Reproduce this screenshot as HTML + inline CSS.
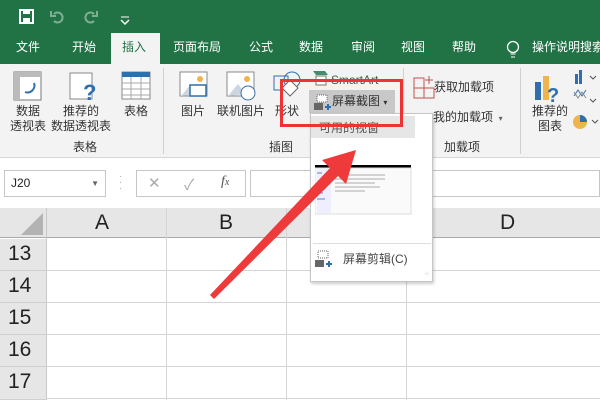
<!DOCTYPE html>
<html><head><meta charset="utf-8"><style>
*{margin:0;padding:0;box-sizing:border-box}
body{width:600px;height:400px;overflow:hidden;position:relative;background:#fff;font-family:"Liberation Sans","Noto Sans CJK SC",sans-serif;font-size:12px;color:#222}
.a{position:absolute;white-space:nowrap}
.tab{position:absolute;top:38px;color:#fff;font-size:12px;white-space:nowrap}
.rb{position:absolute;font-size:12px;color:#333;text-align:center;line-height:15px;white-space:nowrap}
.rn{position:absolute;left:0;width:46px;font-size:21px;color:#222;padding-left:8px;padding-top:3px;background:#e6e6e6;border-bottom:1px solid #d0d0d0}
</style></head><body>
<div class="a" style="left:0;top:0;width:600px;height:64px;background:#217346"></div>
<svg class="a" style="left:18px;top:8px" width="120" height="18">
<rect x="2" y="2" width="13" height="13" fill="none" stroke="#fff" stroke-width="2"/><rect x="5" y="2" width="7" height="4" fill="#fff"/><rect x="5" y="10" width="7" height="5" fill="#fff"/>
<path d="M36 6a5 5 0 1 1 0 7" stroke="#7fae93" stroke-width="2" fill="none"/><path d="M33 3v5h5" stroke="#7fae93" stroke-width="2" fill="none"/>
<path d="M76 6a5 5 0 1 0 0 7" stroke="#7fae93" stroke-width="2" fill="none"/><path d="M79 3v5h-5" stroke="#7fae93" stroke-width="2" fill="none"/>
<path d="M103 12l4 4 4-4" stroke="#fff" stroke-width="1.5" fill="none"/><path d="M103 9h8" stroke="#fff"/>
</svg>
<div class="a" style="left:111px;top:33px;width:49px;height:31px;background:#f3f3f3"></div>
<div class="tab" style="left:16px">文件</div>
<div class="tab" style="left:72px">开始</div>
<div class="tab" style="left:122px;color:#217346">插入</div>
<div class="tab" style="left:173px">页面布局</div>
<div class="tab" style="left:249px">公式</div>
<div class="tab" style="left:299px">数据</div>
<div class="tab" style="left:351px">审阅</div>
<div class="tab" style="left:401px">视图</div>
<div class="tab" style="left:452px">帮助</div>
<svg class="a" style="left:506px;top:40px" width="14" height="20"><circle cx="7" cy="7" r="5.5" stroke="#fff" fill="none" stroke-width="1.3"/><path d="M4.5 14h5M5 17h4" stroke="#fff"/></svg>
<div class="tab" style="left:532px">操作说明搜索</div>
<div class="a" style="left:0;top:64px;width:600px;height:94px;background:#f3f3f3;border-bottom:1px solid #d6d6d6"></div>
<div class="a" style="left:163px;top:68px;width:1px;height:86px;background:#d0d0d0"></div>
<div class="a" style="left:403px;top:68px;width:1px;height:86px;background:#d0d0d0"></div>
<div class="a" style="left:520px;top:68px;width:1px;height:86px;background:#d0d0d0"></div>
<svg class="a" style="left:0;top:68px" width="600" height="40">
<rect x="14" y="4" width="27" height="28" fill="#fff" stroke="#777"/><rect x="14" y="4" width="27" height="5" fill="#bbb"/><rect x="14" y="4" width="6" height="28" fill="#bbb"/><path d="M25 24a7 7 0 0 0 9-9" stroke="#2f6fad" stroke-width="2" fill="none"/>
<rect x="70" y="5" width="22" height="26" fill="#fff" stroke="#888"/><text x="83" y="32" font-size="22" font-weight="bold" fill="#2f6fad">?</text>
<rect x="122" y="4" width="28" height="27" fill="#fff" stroke="#888"/><rect x="122" y="4" width="28" height="5" fill="#2f6fad"/><path d="M122 15h28M122 21h28M122 27h28M131 9v22M141 9v22" stroke="#aaa"/>
<rect x="180" y="4" width="27" height="24" fill="#fff" stroke="#888"/><path d="M181 28l10-12 8 10" fill="#cdd6e0"/><circle cx="200" cy="11" r="3" fill="#f0b44c"/><rect x="190" y="17" width="16" height="11" fill="#fff" stroke="#2f6fad" stroke-width="1.5"/>
<rect x="227" y="4" width="27" height="24" fill="#fff" stroke="#888"/><path d="M228 28l10-12 8 10" fill="#cdd6e0"/><circle cx="247" cy="11" r="3" fill="#f0b44c"/><circle cx="248" cy="25" r="7" fill="#fff" stroke="#2f6fad"/>
<rect x="274" y="8" width="14" height="14" fill="none" stroke="#2f6fad"/><circle cx="292" cy="12" r="8" fill="none" stroke="#2f6fad"/><path d="M290 12l8 8-8 8-8-8z" fill="#fff" stroke="#666"/>
<path d="M313 3h12l3 4h-12z" fill="#4a8a6a"/><rect x="316" y="8" width="10" height="9" fill="#fff" stroke="#777"/>
<rect x="414" y="10" width="10" height="10" fill="none" stroke="#c0504d"/><rect x="414" y="20" width="10" height="10" fill="none" stroke="#c0504d"/><rect x="424" y="20" width="10" height="10" fill="none" stroke="#c0504d"/><path d="M429 8v8M425 12h8" stroke="#c0504d"/>
<rect x="535" y="14" width="6" height="18" fill="#2f6fad"/><rect x="543" y="8" width="6" height="24" fill="#f0b44c"/><text x="547" y="34" font-size="20" font-weight="bold" fill="#2f6fad">?</text>
<rect x="575" y="6" width="3" height="10" fill="#2f6fad"/><rect x="579" y="2" width="3" height="14" fill="#2f6fad"/><path d="M574 28l4-6 4 6 4-6" stroke="#2f6fad" fill="none"/><path d="M574 24l4 6 4-6 4 6" stroke="#888" fill="none"/>
<path d="M590 8l3 3 3-3M590 31l3 3 3-3" stroke="#555" fill="none"/>
</svg>
<svg class="a" style="left:570px;top:112px" width="30" height="20"><circle cx="10" cy="10" r="7" fill="#f0b44c"/><path d="M10 10V3a7 7 0 0 1 7 7z" fill="#2f6fad"/><path d="M22 8l3 3 3-3" stroke="#555" fill="none"/></svg>
<div class="rb" style="left:4px;top:104px;width:48px">数据<br>透视表</div>
<div class="rb" style="left:48px;top:104px;width:66px">推荐的<br>数据透视表</div>
<div class="rb" style="left:116px;top:104px;width:40px">表格</div>
<div class="rb" style="left:65px;top:140px;width:40px">表格</div>
<div class="rb" style="left:175px;top:104px;width:36px">图片</div>
<div class="rb" style="left:214px;top:104px;width:54px">联机图片</div>
<div class="rb" style="left:270px;top:104px;width:34px">形状</div>
<div class="rb" style="left:264px;top:140px;width:34px">插图</div>
<div class="rb" style="left:331px;top:73px;color:#555">SmartArt</div>
<div class="a" style="left:309px;top:90px;width:86px;height:23px;background:#c8c8c8"></div>
<svg class="a" style="left:313px;top:93px" width="18" height="18"><rect x="4" y="2" width="10" height="7" fill="#fff" stroke="#666" stroke-dasharray="1 1"/><rect x="1" y="10" width="9" height="7" fill="#666"/><path d="M12 14h6M15 11v6" stroke="#2f6fad" stroke-width="2"/></svg>
<div class="rb" style="left:332px;top:94px">屏幕截图 <span style="font-size:8px">▾</span></div>
<div class="rb" style="left:434px;top:80px">获取加载项</div>
<div class="rb" style="left:433px;top:110px">我的加载项 <span style="font-size:8px;color:#666">&nbsp;▾</span></div>
<div class="rb" style="left:444px;top:140px">加载项</div>
<div class="rb" style="left:528px;top:104px;width:44px">推荐的<br>图表</div>
<div class="a" style="left:0;top:159px;width:600px;height:49px;background:#fff"></div>
<div class="a" style="left:4px;top:170px;width:102px;height:27px;border:1px solid #c6c6c6;padding:5px 6px;font-size:12px">J20<span style="position:absolute;right:6px;font-size:8px;color:#666;top:8px">▼</span></div>
<div class="a" style="left:119px;top:174px;color:#aaa;font-size:10px;line-height:6px">·<br>·<br>·</div>
<div class="a" style="left:136px;top:170px;width:110px;height:27px;border:1px solid #c6c6c6"></div>
<div class="a" style="left:148px;top:174px;color:#aaa;font-size:15px">✕</div>
<div class="a" style="left:184px;top:174px;color:#aaa;font-size:15px">✓</div>
<div class="a" style="left:221px;top:174px;color:#555;font-size:14px;font-style:italic;font-family:'Liberation Serif',serif">f<span style="font-size:10px">x</span></div>
<div class="a" style="left:250px;top:170px;width:350px;height:27px;border:1px solid #c6c6c6"></div>
<div class="a" style="left:0;top:208px;width:600px;height:30px;background:#e6e6e6;border-bottom:1px solid #aaa"></div>
<svg class="a" style="left:20px;top:212px" width="24" height="24"><path d="M23 1v22H1z" fill="#b3b3b3"/></svg>
<div class="a" style="left:46px;top:208px;width:1px;height:192px;background:#c8c8c8"></div>
<div class="a" style="left:166px;top:208px;width:1px;height:192px;background:#d4d4d4"></div>
<div class="a" style="left:286px;top:208px;width:1px;height:192px;background:#d4d4d4"></div>
<div class="a" style="left:406px;top:208px;width:1px;height:192px;background:#d4d4d4"></div>
<div class="a" style="left:95px;top:211px;font-size:21px">A</div>
<div class="a" style="left:219px;top:211px;font-size:21px">B</div>
<div class="a" style="left:500px;top:211px;font-size:21px">D</div>
<div class="rn" style="top:239px;height:32px">13</div>
<div class="rn" style="top:271px;height:32px">14</div>
<div class="rn" style="top:303px;height:32px">15</div>
<div class="rn" style="top:335px;height:32px">16</div>
<div class="rn" style="top:367px;height:33px">17</div>
<div class="a" style="left:46px;top:270px;width:554px;height:1px;background:#d4d4d4"></div>
<div class="a" style="left:46px;top:302px;width:554px;height:1px;background:#d4d4d4"></div>
<div class="a" style="left:46px;top:334px;width:554px;height:1px;background:#d4d4d4"></div>
<div class="a" style="left:46px;top:366px;width:554px;height:1px;background:#d4d4d4"></div>
<div class="a" style="left:46px;top:398px;width:554px;height:1px;background:#d4d4d4"></div>
<div class="a" style="left:310px;top:113px;width:123px;height:169px;background:#fff;border:1px solid #c6c6c6;box-shadow:1px 2px 3px rgba(0,0,0,.2)"></div>
<div class="a" style="left:311px;top:116px;width:104px;height:22px;background:#e6e6e6;color:#555;padding:3px 8px">可用的视窗</div>
<svg class="a" style="left:315px;top:165px" width="97" height="52"><rect x="0" y="0" width="96" height="3" fill="#000"/><rect x="0" y="3" width="96" height="46" fill="#fafafa" stroke="#ddd"/><rect x="2" y="4" width="14" height="44" fill="#eef"/><path d="M20 10h50M20 14h50M20 18h40M20 22h45M20 26h30" stroke="#aaa"/><path d="M2 8h5M2 20h8M2 28h6M2 34h8" stroke="#5a87c8"/></svg>
<div class="a" style="left:313px;top:243px;width:118px;height:1px;background:#ddd"></div>
<svg class="a" style="left:314px;top:250px" width="20" height="18"><rect x="4" y="1" width="10" height="7" fill="none" stroke="#666" stroke-dasharray="1 1"/><rect x="1" y="10" width="9" height="7" fill="#666"/><path d="M12 14h6M15 11v6" stroke="#2f6fad" stroke-width="2"/></svg>
<div class="a" style="left:343px;top:250px;color:#444">屏幕剪辑(C)</div>
<div class="a" style="left:424px;top:270px;color:#999;font-size:7px">⁘</div>
<div class="a" style="left:280px;top:79px;width:123px;height:48px;border:3px solid #ee3333"></div>
<svg class="a" style="left:0;top:0" width="600" height="400"><path d="M210 295L330 168L322 160L356 150L346 184L338 176L214 299z" fill="#ee3a3a"/></svg>
</body></html>
